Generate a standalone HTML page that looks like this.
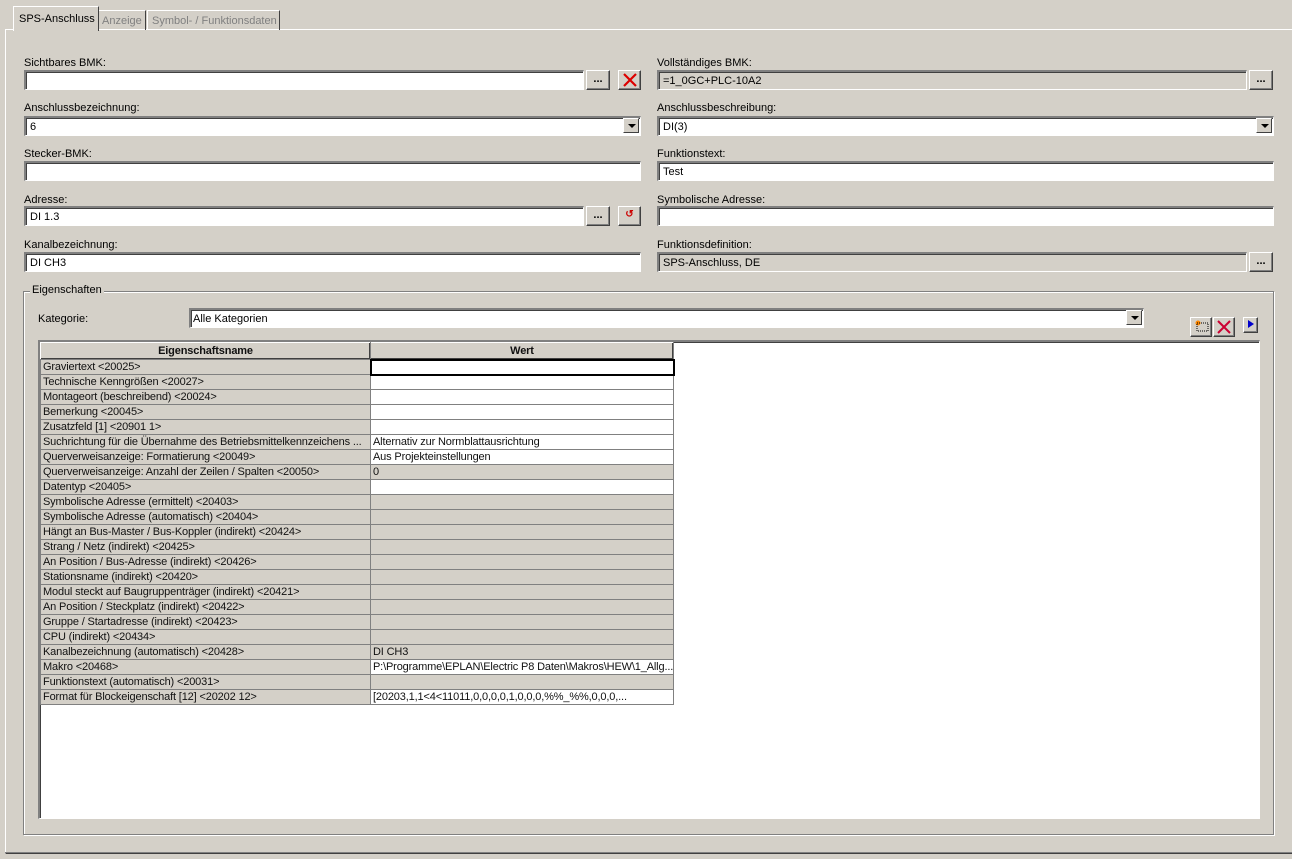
<!DOCTYPE html>
<html><head><meta charset="utf-8"><style>
*{box-sizing:border-box}
body{margin:0;width:1292px;height:859px;background:#d4d0c8;font:11px "Liberation Sans",sans-serif;color:#000;position:relative;overflow:hidden}
.a{position:absolute}
.in{position:absolute;height:20px;background:#fff;border-top:2px solid #808080;border-left:2px solid #808080;border-bottom:1px solid #fff;border-right:1px solid #fff;box-shadow:inset 1px 1px 0 #404040;padding:3px 0 0 4px;white-space:nowrap}
.in.g{background:#d4d0c8}
.btn{position:absolute;width:24px;height:20px;background:#d4d0c8;border-top:1px solid #fff;border-left:1px solid #fff;border-right:1px solid #404040;border-bottom:1px solid #404040;box-shadow:inset -1px -1px 0 #808080;text-align:center;font-weight:bold;line-height:16px}
.dd{position:absolute;width:16px;height:15px;background:#d4d0c8;border-top:1px solid #fff;border-left:1px solid #fff;border-right:1px solid #404040;border-bottom:1px solid #404040}
.dd:after{content:"";position:absolute;left:4px;top:5px;border-left:4px solid transparent;border-right:4px solid transparent;border-top:4px solid #000}
.lb{position:absolute;margin-top:2px}
table{border-collapse:collapse;position:absolute;left:40px;top:342px;table-layout:fixed;width:633px;letter-spacing:-0.15px;color:#111}
td{border:1px solid #808080;height:15px;padding:0 2px;white-space:nowrap;overflow:hidden;line-height:13px}
td.n{background:#d4d0c8}
td.v{background:#fff}
td.v.g{background:#d4d0c8}
th{background:#d4d0c8;height:17px;border:1px solid #808080;border-top-color:#fff;border-left-color:#fff;box-shadow:inset -1px -1px 0 #404040;font-weight:bold;padding:0}
</style></head><body>
<div class="a" style="left:5px;top:29px;width:1300px;height:825px;border-top:1px solid #fff;border-left:1px solid #fff;border-bottom:1px solid #404040"></div>
<div class="a" style="left:5px;top:852px;width:1292px;height:1px;background:#808080"></div>
<div class="a" style="left:13px;top:6px;width:86px;height:25px;background:#d4d0c8;border-top:1px solid #fff;border-left:1px solid #fff;border-right:1px solid #404040;padding:6px 0 0 5px">SPS-Anschluss</div>
<div class="a" style="left:99px;top:10px;width:47px;height:20px;border-top:1px solid #fff;border-right:1px solid #404040;padding:4px 0 0 3px;color:#808080">Anzeige</div>
<div class="a" style="left:147px;top:10px;width:133px;height:20px;border-top:1px solid #fff;border-left:1px solid #fff;border-right:1px solid #404040;padding:4px 0 0 4px;color:#808080">Symbol- / Funktionsdaten</div>

<div class="lb" style="left:24px;top:55px">Sichtbares BMK:</div>
<div class="in" style="left:24px;top:70px;width:560px"></div>
<div class="btn" style="left:586px;top:70px">...</div>
<div class="btn" style="left:618px;top:70px;width:23px"><svg width="16" height="14" style="margin-top:2px"><path d="M2 1L14 13M14 1L2 13" stroke="#d00" stroke-width="2.2"/></svg></div>
<div class="lb" style="left:24px;top:100px">Anschlussbezeichnung:</div>
<div class="in" style="left:24px;top:116px;width:617px">6</div><div class="dd" style="left:623px;top:118px"></div>
<div class="lb" style="left:24px;top:146px">Stecker-BMK:</div>
<div class="in" style="left:24px;top:161px;width:617px"></div>
<div class="lb" style="left:24px;top:192px">Adresse:</div>
<div class="in" style="left:24px;top:206px;width:560px">DI 1.3</div>
<div class="btn" style="left:586px;top:206px">...</div>
<div class="btn" style="left:618px;top:206px;width:23px;color:#c00;font-size:10px">↺</div>
<div class="lb" style="left:24px;top:237px">Kanalbezeichnung:</div>
<div class="in" style="left:24px;top:252px;width:617px">DI CH3</div>

<div class="lb" style="left:657px;top:55px">Vollständiges BMK:</div>
<div class="in g" style="left:657px;top:70px;width:590px">=1_0GC+PLC-10A2</div>
<div class="btn" style="left:1249px;top:70px">...</div>
<div class="lb" style="left:657px;top:100px">Anschlussbeschreibung:</div>
<div class="in" style="left:657px;top:116px;width:617px">DI(3)</div><div class="dd" style="left:1256px;top:118px"></div>
<div class="lb" style="left:657px;top:146px">Funktionstext:</div>
<div class="in" style="left:657px;top:161px;width:617px">Test</div>
<div class="lb" style="left:657px;top:192px">Symbolische Adresse:</div>
<div class="in" style="left:657px;top:206px;width:617px"></div>
<div class="lb" style="left:657px;top:237px">Funktionsdefinition:</div>
<div class="in g" style="left:657px;top:252px;width:590px">SPS-Anschluss, DE</div>
<div class="btn" style="left:1249px;top:252px">...</div>

<div class="a" style="left:23px;top:291px;width:1251px;height:544px;border:1px solid #808080;box-shadow:1px 1px 0 #fff, inset 1px 1px 0 #fff"></div>
<div class="a" style="left:30px;top:284px;background:#d4d0c8;padding:0 2px">Eigenschaften</div>
<div class="lb" style="left:38px;top:311px">Kategorie:</div>
<div class="in" style="left:189px;top:308px;width:955px;padding-left:2px">Alle Kategorien</div><div class="dd" style="left:1126px;top:310px"></div>
<div class="btn" style="left:1190px;top:317px;width:22px"><svg width="18" height="14"><circle cx="6" cy="5" r="2.5" fill="#f80"/><rect x="5" y="5" width="11" height="8" fill="none" stroke="#000" stroke-dasharray="1 1"/></svg></div>
<div class="btn" style="left:1213px;top:317px;width:22px"><svg width="16" height="14" style="margin-top:2px"><path d="M2 1L14 13M14 1L2 13" stroke="#c03" stroke-width="2"/></svg></div>
<div class="btn" style="left:1243px;top:317px;width:15px;height:16px"><svg width="10" height="10"><path d="M2 1V9L8 5Z" fill="#00c"/></svg></div>

<div class="a" style="left:38px;top:340px;width:1222px;height:479px;background:#fff;border-top:2px solid #808080;border-left:2px solid #808080;border-bottom:1px solid #fff;border-right:1px solid #fff;box-shadow:inset 1px 1px 0 #404040"></div>
<table>
<colgroup><col style="width:330px"><col style="width:303px"></colgroup>
<tr><th>Eigenschaftsname</th><th>Wert</th></tr>
<tr><td class="n">Graviertext &lt;20025&gt;</td><td class="v" style="border:2px solid #000"></td></tr>
<tr><td class="n">Technische Kenngrößen &lt;20027&gt;</td><td class="v"></td></tr>
<tr><td class="n">Montageort (beschreibend) &lt;20024&gt;</td><td class="v"></td></tr>
<tr><td class="n">Bemerkung &lt;20045&gt;</td><td class="v"></td></tr>
<tr><td class="n">Zusatzfeld [1] &lt;20901 1&gt;</td><td class="v"></td></tr>
<tr><td class="n">Suchrichtung für die Übernahme des Betriebsmittelkennzeichens ...</td><td class="v">Alternativ zur Normblattausrichtung</td></tr>
<tr><td class="n">Querverweisanzeige: Formatierung &lt;20049&gt;</td><td class="v">Aus Projekteinstellungen</td></tr>
<tr><td class="n">Querverweisanzeige: Anzahl der Zeilen / Spalten &lt;20050&gt;</td><td class="v g">0</td></tr>
<tr><td class="n">Datentyp &lt;20405&gt;</td><td class="v"></td></tr>
<tr><td class="n">Symbolische Adresse (ermittelt) &lt;20403&gt;</td><td class="v g"></td></tr>
<tr><td class="n">Symbolische Adresse (automatisch) &lt;20404&gt;</td><td class="v g"></td></tr>
<tr><td class="n">Hängt an Bus-Master / Bus-Koppler (indirekt) &lt;20424&gt;</td><td class="v g"></td></tr>
<tr><td class="n">Strang / Netz (indirekt) &lt;20425&gt;</td><td class="v g"></td></tr>
<tr><td class="n">An Position / Bus-Adresse (indirekt) &lt;20426&gt;</td><td class="v g"></td></tr>
<tr><td class="n">Stationsname (indirekt) &lt;20420&gt;</td><td class="v g"></td></tr>
<tr><td class="n">Modul steckt auf Baugruppenträger (indirekt) &lt;20421&gt;</td><td class="v g"></td></tr>
<tr><td class="n">An Position / Steckplatz (indirekt) &lt;20422&gt;</td><td class="v g"></td></tr>
<tr><td class="n">Gruppe / Startadresse (indirekt) &lt;20423&gt;</td><td class="v g"></td></tr>
<tr><td class="n">CPU (indirekt) &lt;20434&gt;</td><td class="v g"></td></tr>
<tr><td class="n">Kanalbezeichnung (automatisch) &lt;20428&gt;</td><td class="v g">DI CH3</td></tr>
<tr><td class="n">Makro &lt;20468&gt;</td><td class="v">P:\Programme\EPLAN\Electric P8 Daten\Makros\HEW\1_Allg...</td></tr>
<tr><td class="n">Funktionstext (automatisch) &lt;20031&gt;</td><td class="v g"></td></tr>
<tr><td class="n">Format für Blockeigenschaft [12] &lt;20202 12&gt;</td><td class="v">[20203,1,1&lt;4&lt;11011,0,0,0,0,1,0,0,0,%%_%%,0,0,0,...</td></tr>
</table>
</body></html>
